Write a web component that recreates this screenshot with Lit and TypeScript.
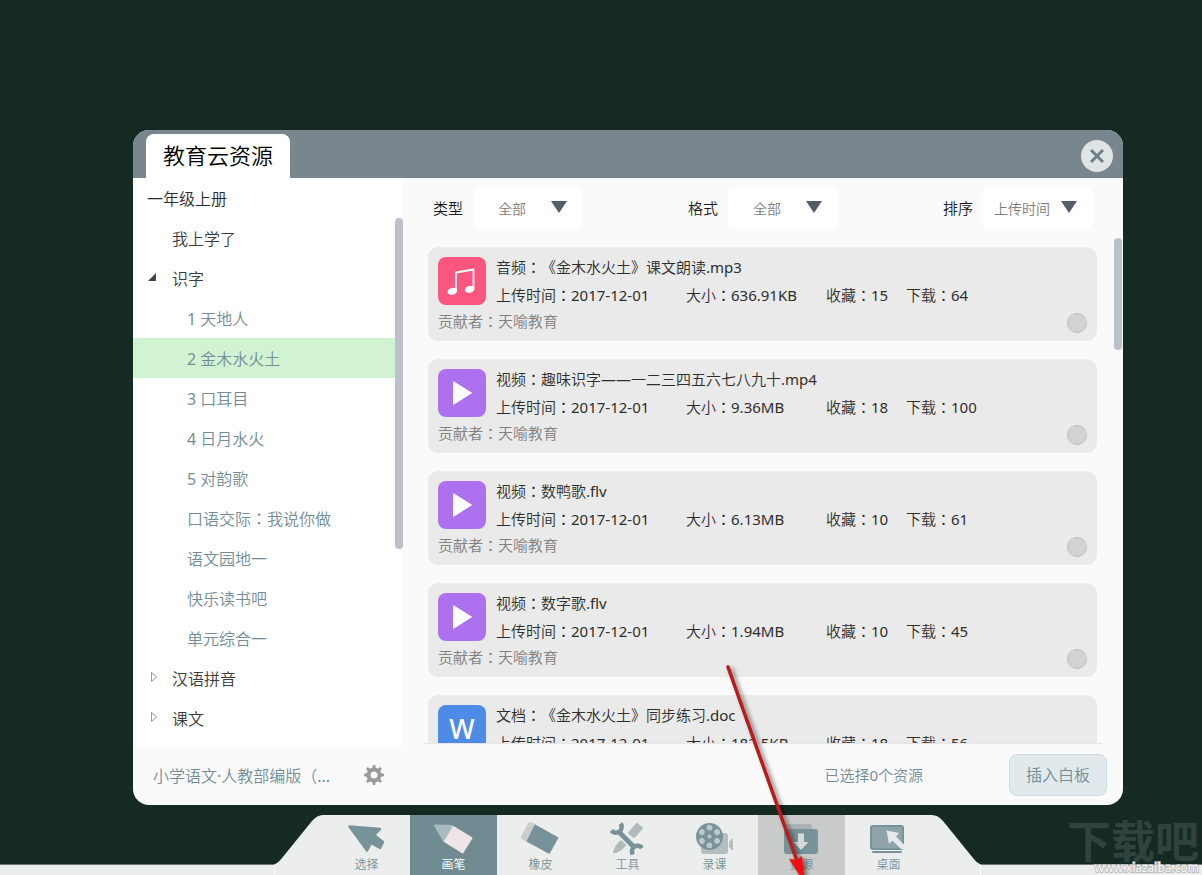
import { LitElement, html, css, svg, nothing } from "lit";
import { customElement, property } from "lit/decorators.js";
import { classMap } from "lit/directives/class-map.js";
import { styleMap } from "lit/directives/style-map.js";

interface TreeNode {
  label: string;
  level: 1 | 2;
  state?: "open" | "closed";
  selected?: boolean;
}

interface Resource {
  kind: "audio" | "video" | "doc";
  type: string;
  name: string;
  date: string;
  size: string;
  favs: number;
  downloads: number;
}

const TREE: TreeNode[] = [
  { label: "我上学了", level: 1 },
  { label: "识字", level: 1, state: "open" },
  { label: "1 天地人", level: 2 },
  { label: "2 金木水火土", level: 2, selected: true },
  { label: "3 口耳目", level: 2 },
  { label: "4 日月水火", level: 2 },
  { label: "5 对韵歌", level: 2 },
  { label: "口语交际：我说你做", level: 2 },
  { label: "语文园地一", level: 2 },
  { label: "快乐读书吧", level: 2 },
  { label: "单元综合一", level: 2 },
  { label: "汉语拼音", level: 1, state: "closed" },
  { label: "课文", level: 1, state: "closed" },
];

const RESOURCES: Resource[] = [
  { kind: "audio", type: "音频", name: "《金木水火土》课文朗读.mp3", date: "2017-12-01", size: "636.91KB", favs: 15, downloads: 64 },
  { kind: "video", type: "视频", name: "趣味识字——一二三四五六七八九十.mp4", date: "2017-12-01", size: "9.36MB", favs: 18, downloads: 100 },
  { kind: "video", type: "视频", name: "数鸭歌.flv", date: "2017-12-01", size: "6.13MB", favs: 10, downloads: 61 },
  { kind: "video", type: "视频", name: "数字歌.flv", date: "2017-12-01", size: "1.94MB", favs: 10, downloads: 45 },
  { kind: "doc", type: "文档", name: "《金木水火土》同步练习.doc", date: "2017-12-01", size: "182.5KB", favs: 18, downloads: 56 },
];

const FILTERS = [
  { id: "type", label: "类型", value: "全部" },
  { id: "format", label: "格式", value: "全部" },
  { id: "sort", label: "排序", value: "上传时间" },
];

const HOLES = [0, 60, 120, 180, 240, 300];
const TEETH = [0, 45, 90, 135, 180, 225, 270, 315];

const TOOLS = [
  {
    label: "选择",
    state: "",
    icon: svg`<path d="M6.500 11.500L37 14L31 20L40 27L37 33L28 28L24 35.500Z" fill="#78929a" stroke="#78929a" stroke-width="2.500" stroke-linejoin="round"/>`,
  },
  {
    label: "画笔",
    state: "active",
    icon: svg`<path d="M5 10.500L22 11L14 26Z" fill="#a9bbc0" stroke="#a9bbc0" stroke-width="2" stroke-linejoin="round"/>
      <path d="M23.500 12L41.500 23L32.500 37.500L15 26.500Z" fill="#ede5e7" stroke="#ede5e7" stroke-width="2" stroke-linejoin="round"/>`,
  },
  {
    label: "橡皮",
    state: "",
    icon: svg`<path d="M12.500 8.500L18 10L10 26L5 22.500Z" fill="#c9cdce" stroke="#c9cdce" stroke-width="2.500" stroke-linejoin="round"/>
      <path d="M18.500 11L40 23L32 37.500L11 26Z" fill="#78929a" stroke="#78929a" stroke-width="2.500" stroke-linejoin="round"/>`,
  },
  {
    label: "工具",
    state: "",
    icon: svg`<path d="M33 9L38 13L30 22L25 18Z" fill="#b0babd" stroke="#b0babd" stroke-width="2" stroke-linejoin="round"/>
      <path d="M9 38.500Q9.500 31 17 25L22.500 30Q16 38 9 38.500Z" fill="#b0babd"/>
      <path d="M15 17L30 32" stroke="#78929a" stroke-width="5"/>
      <path d="M16.500 8.500A5.500 5.500 0 1 1 7.500 15.500" fill="none" stroke="#78929a" stroke-width="4.500"/>
      <path d="M38 33A5.500 5.500 0 1 0 29 39.500" fill="none" stroke="#78929a" stroke-width="4.500"/>`,
  },
  {
    label: "录课",
    state: "",
    icon: svg`<rect x="10" y="18" width="27" height="21" rx="3" fill="#b4bec1"/>
      <path d="M38 27L42 23V36L38 32Z" fill="#b4bec1"/>
      <circle cx="18.500" cy="21.500" r="13.500" fill="#78929a"/>
      <circle cx="18.500" cy="21.500" r="2" fill="#bcc8cb"/>
      ${HOLES.map((a) => svg`<circle cx="18.500" cy="12.700" r="2.900" fill="#bcc8cb" transform=${`rotate(${a} 18.500 21.500)`}/>`)}`,
  },
  {
    label: "资源",
    state: "hover",
    icon: svg`<path d="M8 16V11Q8 9 10 9H31Q34 9 34 12V16Z" fill="#a9b3b5"/>
      <rect x="6" y="14" width="34" height="25" rx="3" fill="#78929a"/>
      <path d="M20 18.500H26V27H30.500L23 35L15.500 27H20Z" fill="#d6dbdc"/>`,
  },
  {
    label: "桌面",
    state: "",
    icon: svg`<rect x="6" y="11" width="32" height="23" rx="2" fill="#8fa4aa" stroke="#78929a" stroke-width="2"/>
      <path d="M21.500 15.500L34 18L31 21.500L39 29.500V34H36L27.500 25.500L24 29Z" fill="#e6eaeb"/>
      <rect x="7" y="36" width="30" height="2" rx="1" fill="#78929a"/>`,
  },
];

/* Full-width colons take the centred form of the glyph. */
const withColon = (text: string) =>
  text.split("：").map((part, i) => html`${i ? html`<span class="colon">：</span>` : nothing}${part}`);

const sharedStyles = css`
  * {
    box-sizing: border-box;
  }
  button,
  select,
  input {
    font: inherit;
    color: inherit;
    margin: 0;
    padding: 0;
    border: 0;
    background: none;
  }
  svg {
    display: block;
  }
  .colon {
    font-family: "Noto Sans CJK TC", sans-serif;
    line-height: 0;
  }
`;

@customElement("scroll-track")
class ScrollTrack extends LitElement {
  @property({ type: Number }) share = 50;

  static styles = css`
    :host {
      display: block;
      width: 8px;
    }
    .thumb {
      border-radius: 4px;
      background: #bcc0ca;
    }
  `;

  render() {
    return html`<div class="thumb" style=${styleMap({ height: `${this.share}%` })}></div>`;
  }
}

@customElement("chapter-tree")
class ChapterTree extends LitElement {
  static styles = [
    sharedStyles,
    css`
      :host {
        display: grid;
        grid-template-rows: 40px minmax(0, 1fr);
        background: #fff;
        font-size: 16px;
        line-height: 38px;
        color: #3c3c3c;
      }
      .book {
        margin: 0;
        padding: 2px 0 0 14px;
        font-size: 16px;
        font-weight: inherit;
        color: #2c2c2c;
      }
      .pane {
        display: grid;
        grid-template-columns: minmax(0, 1fr) 8px;
        grid-template-rows: minmax(0, 1fr);
      }
      .nodes {
        margin: 0;
        padding: 0;
        list-style: none;
        overflow: hidden;
      }
      .node {
        display: grid;
        grid-template-columns: 24px 1fr;
        align-items: center;
        width: 100%;
        height: 40px;
        padding: 2px 0 0 15px;
        text-align: left;
        cursor: pointer;
      }
      .leaf {
        grid-template-columns: 1fr;
        padding-left: 54px;
        color: #738d96;
      }
      .selected {
        background: #d2f3d2;
      }
      .marker {
        width: 12px;
        height: 12px;
        margin-bottom: 5px;
      }
    `,
  ];

  private marker(state?: string) {
    if (state === "open")
      return html`<svg class="marker" viewBox="0 0 12 12" aria-hidden="true"><path d="M8 2V10H0Z" fill="#444"/></svg>`;
    if (state === "closed")
      return html`<svg class="marker" viewBox="0 0 12 12" aria-hidden="true"><path d="M3.500 1.500V10.500L8.500 6Z" fill="none" stroke="#999"/></svg>`;
    return html`<span></span>`;
  }

  render() {
    return html`
      <h2 class="book">一年级上册</h2>
      <div class="pane">
        <ul class="nodes">
          ${TREE.map(
            (n) => html`<li>
              <button type="button" class=${classMap({ node: true, leaf: n.level === 2, selected: !!n.selected })}>
                ${n.level === 1 ? this.marker(n.state) : nothing}<span>${withColon(n.label)}</span>
              </button>
            </li>`
          )}
        </ul>
        <scroll-track .share=${62.8}></scroll-track>
      </div>
    `;
  }
}

@customElement("resource-card")
class ResourceCard extends LitElement {
  @property({ attribute: false }) item!: Resource;

  static styles = [
    sharedStyles,
    css`
      :host {
        display: grid;
        grid-template-columns: 48px minmax(0, 1fr);
        column-gap: 10px;
        flex: none;
        padding: 6px 10px 4px;
        border-radius: 10px;
        background: #eaeaea;
        font-size: 15px;
        line-height: 28px;
        color: #2e2e2e;
      }
      .icon {
        display: grid;
        place-items: center;
        width: 48px;
        height: 48px;
        margin-top: 4px;
        border-radius: 8px;
        color: #fff;
        font-size: 27px;
        font-weight: 500;
      }
      .audio {
        background: #fa5680;
      }
      .video {
        background: #ad70ee;
      }
      .doc {
        background: #4d8be6;
      }
      .title {
        margin: 0;
        font-size: 15px;
        font-weight: inherit;
        white-space: nowrap;
      }
      .meta {
        display: grid;
        grid-template-columns: 190px 140px 80px auto;
        white-space: nowrap;
      }
      .bottom {
        grid-column: 1 / -1;
        display: flex;
        align-items: center;
        justify-content: space-between;
        height: 28px;
        line-height: 24px;
        color: #808080;
      }
      .from {
        align-self: flex-start;
      }
      .pick {
        appearance: none;
        width: 20px;
        height: 20px;
        border: 1px solid #bdbdbd;
        border-radius: 50%;
        background: #d3d3d3;
      }
    `,
  ];

  private icon() {
    if (this.item.kind === "audio")
      return html`<svg width="48" height="48" viewBox="0 0 48 48" aria-hidden="true">
        <path d="M18 34V15.500L35.500 12.500V32" fill="none" stroke="#fff" stroke-width="1.800" stroke-linejoin="round" />
        <ellipse cx="14.300" cy="34.300" rx="4.800" ry="3.500" fill="#fff" transform="rotate(-12 14.300 34.300)" />
        <ellipse cx="31.600" cy="32.300" rx="4.800" ry="3.500" fill="#fff" transform="rotate(-12 31.600 32.300)" />
      </svg>`;
    if (this.item.kind === "video")
      return html`<svg width="48" height="48" viewBox="0 0 48 48" aria-hidden="true">
        <path d="M15.500 12.700V35.300L33.500 24Z" fill="#fff" stroke="#fff" stroke-linejoin="round" />
      </svg>`;
    return html`W`;
  }

  render() {
    const r = this.item;
    return html`
      <div class=${`icon ${r.kind}`}>${this.icon()}</div>
      <div>
        <h3 class="title">${withColon(`${r.type}：${r.name}`)}</h3>
        <div class="meta">
          <span>${withColon(`上传时间：${r.date}`)}</span>
          <span>${withColon(`大小：${r.size}`)}</span>
          <span>${withColon(`收藏：${r.favs}`)}</span>
          <span>${withColon(`下载：${r.downloads}`)}</span>
        </div>
      </div>
      <div class="bottom">
        <span class="from">${withColon("贡献者：天喻教育")}</span>
        <input class="pick" type="checkbox" aria-label=${r.name} />
      </div>
    `;
  }
}

@customElement("resource-browser")
class ResourceBrowser extends LitElement {
  static styles = [
    sharedStyles,
    css`
      :host {
        display: grid;
        grid-template-rows: 60px minmax(0, 1fr);
        padding: 0 1px 1px 20px;
        font-size: 15px;
        color: #1c1c1c;
      }
      .filters {
        display: flex;
        justify-content: space-between;
        padding: 10px 29px 10px 10px;
      }
      .filter {
        display: grid;
        grid-template-columns: 40px 78px 32px;
        align-items: center;
      }
      .name {
        padding-bottom: 2px;
      }
      .choice {
        grid-area: 1 / 2 / 2 / 4;
        appearance: none;
        height: 40px;
        padding-right: 32px;
        border-radius: 6px;
        background: #fff;
        font-size: 14px;
        text-align: center;
        text-align-last: center;
        color: #7c7c7c;
      }
      .caret {
        grid-area: 1 / 3;
        margin-bottom: 2px;
        pointer-events: none;
      }
      .pane {
        display: grid;
        grid-template-columns: minmax(0, 1fr) 8px;
        grid-template-rows: minmax(0, 1fr);
        column-gap: 12px;
      }
      .cards {
        display: flex;
        flex-direction: column;
        gap: 18px;
        padding: 9px 5px 0;
        overflow: hidden;
        border-bottom: 1px solid #e6e6e6;
      }
    `,
  ];

  render() {
    return html`
      <div class="filters">
        ${FILTERS.map(
          (f) => html`<div class="filter">
            <label class="name" for=${f.id}>${f.label}</label>
            <select class="choice" id=${f.id}>
              <option>${f.value}</option>
            </select>
            <svg class="caret" width="16" height="12" viewBox="0 0 16 12" aria-hidden="true">
              <path d="M0 0H16L8 12Z" fill="#565c6b" />
            </svg>
          </div>`
        )}
      </div>
      <div class="pane">
        <div class="cards">${RESOURCES.map((r) => html`<resource-card .item=${r}></resource-card>`)}</div>
        <scroll-track .share=${22.2}></scroll-track>
      </div>
    `;
  }
}

@customElement("board-toolbar")
class BoardToolbar extends LitElement {
  static styles = [
    sharedStyles,
    css`
      :host {
        display: flex;
        align-items: flex-end;
        height: 60px;
        font-size: 12px;
        line-height: 16px;
        color: #78929a;
      }
      .ledge {
        height: 11px;
        border-top: 1px solid #6d7774;
        background: #eceeed;
      }
      .before {
        flex: 275 0 0;
        border-right: 1px solid #fff;
      }
      .after {
        flex: 222 0 0;
        border-left: 1px solid #fff;
      }
      .slope {
        flex: none;
      }
      .mirrored {
        transform: scaleX(-1);
      }
      .tools {
        display: flex;
        background: #eceeed;
      }
      .tool {
        display: flex;
        flex-direction: column;
        align-items: center;
        width: 87px;
        height: 60px;
        cursor: pointer;
      }
      .active {
        background: #718b93;
        color: #fff;
      }
      .hover {
        background: #c9cbca;
      }
      .caption {
        margin-top: 2px;
      }
    `,
  ];

  private slope(mirrored: boolean) {
    return html`<svg class=${classMap({ slope: true, mirrored })} width="48" height="60" viewBox="0 0 48 60" aria-hidden="true">
      <path d="M0 60V49Q3 48 7 43L37 6Q42 0 48 0V60Z" fill="#eceeed" />
    </svg>`;
  }

  render() {
    return html`
      <div class="ledge before"></div>
      ${this.slope(false)}
      <nav class="tools">
        ${TOOLS.map(
          (t) => html`<button type="button" class=${`tool ${t.state}`}>
            <svg width="47" height="40" viewBox="0 0 47 40" aria-hidden="true">${t.icon}</svg>
            <span class="caption">${t.label}</span>
          </button>`
        )}
      </nav>
      ${this.slope(true)}
      <div class="ledge after"></div>
    `;
  }
}

@customElement("app-root")
class AppRoot extends LitElement {
  static styles = [
    sharedStyles,
    css`
      :host {
        position: relative;
        display: grid;
        grid-template-rows: minmax(0, 1fr) 60px;
        height: 100vh;
        overflow: hidden;
        background: #142a23;
        font-family: "Noto Sans", "Noto Sans CJK SC DemiLight", "Noto Sans CJK SC", sans-serif;
        font-weight: 400;
        text-spacing-trim: space-all;
      }
      .stage {
        display: grid;
        grid-template-rows: minmax(0, 1fr);
        padding: 130px 79px 10px 133px;
      }
      .dialog {
        display: grid;
        grid-template-rows: 48px minmax(0, 1fr) 60px;
        overflow: hidden;
        border-radius: 16px;
        background: #fafafa;
      }
      .head {
        display: flex;
        align-items: center;
        justify-content: space-between;
        padding: 4px 10px 0 13px;
        background: #79868e;
      }
      .tab {
        align-self: stretch;
        margin: 0;
        padding: 0 17px;
        border-radius: 8px 8px 0 0;
        background: #fff;
        font-size: 22px;
        font-weight: inherit;
        line-height: 42px;
        color: #000;
      }
      .close {
        cursor: pointer;
      }
      .body {
        display: grid;
        grid-template-columns: 270px minmax(0, 1fr);
        grid-template-rows: minmax(0, 1fr);
      }
      .foot {
        display: flex;
        align-items: center;
        padding: 0 16px 0 20px;
        font-size: 16px;
        color: #738d96;
      }
      .series {
        width: 211px;
        white-space: nowrap;
      }
      .gear {
        cursor: pointer;
      }
      .count {
        margin-left: auto;
        margin-right: 86px;
        padding-bottom: 2px;
        font-size: 15px;
      }
      .insert {
        height: 42px;
        padding: 0 16px 2px;
        border: 1px solid #ccdadf;
        border-radius: 8px;
        background: #e1e9ec;
        cursor: pointer;
      }
      .pointer {
        position: absolute;
        left: 715px;
        bottom: 0;
        pointer-events: none;
      }
      .watermark {
        position: absolute;
        right: 3px;
        bottom: 0;
        display: grid;
        justify-items: end;
        pointer-events: none;
      }
      .brand {
        font-family: "Noto Sans CJK SC", sans-serif;
        font-size: 44px;
        font-weight: 700;
        line-height: 44px;
        color: #30433d;
      }
      .site {
        font-size: 12px;
        line-height: 14px;
        color: #f8f8f8;
        -webkit-text-stroke: 2px #bdbfbf;
        paint-order: stroke fill;
      }
    `,
  ];

  render() {
    return html`
      <main class="stage">
        <section class="dialog">
          <header class="head">
            <h1 class="tab">教育云资源</h1>
            <button type="button" class="close" aria-label="关闭">
              <svg width="32" height="32" viewBox="0 0 32 32">
                <circle cx="16" cy="16" r="16" fill="#dfe4e4" />
                <path d="M10 10L22 22M22 10L10 22" stroke="#6f8088" stroke-width="3" />
              </svg>
            </button>
          </header>
          <div class="body">
            <chapter-tree></chapter-tree>
            <resource-browser></resource-browser>
          </div>
          <footer class="foot">
            <span class="series">小学语文·人教部编版（...</span>
            <button type="button" class="gear" aria-label="设置">
              <svg width="20" height="20" viewBox="0 0 20 20">
                ${TEETH.map((a) => svg`<path d="M8.300 4L8.800 0H11.200L11.700 4Z" fill="#999" transform=${`rotate(${a} 10 10)`}/>`)}
                <circle cx="10" cy="10" r="5.500" fill="none" stroke="#999" stroke-width="4" />
              </svg>
            </button>
            <span class="count">已选择0个资源</span>
            <button type="button" class="insert">插入白板</button>
          </footer>
        </section>
      </main>
      <board-toolbar></board-toolbar>
      <div class="watermark">
        <span class="brand">下载吧</span>
        <span class="site">www.xiazaiba.com</span>
      </div>
      <svg class="pointer" width="110" height="220" viewBox="0 0 110 220" aria-hidden="true">
        <defs>
          <filter id="soft" x="-30%" y="-10%" width="160%" height="120%">
            <feDropShadow dx="3" dy="2" stdDeviation="2" flood-color="#000" flood-opacity="0.500" />
          </filter>
        </defs>
        <g filter="url(#soft)">
          <path d="M13 12L82 206" stroke="#b91a1a" stroke-width="3.500" stroke-linecap="round" />
          <path d="M74 204L81 205L87 201L90 229Z" fill="#f40b0b" />
        </g>
      </svg>
    `;
  }
}
